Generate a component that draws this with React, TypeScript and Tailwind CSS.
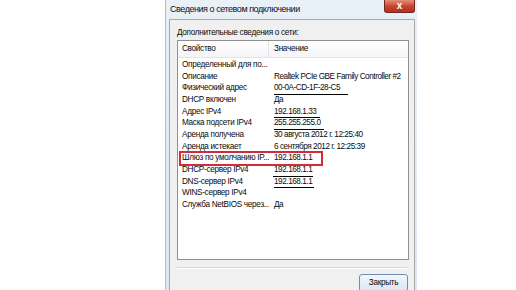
import React from "react";

type Row = { k: string; v: string; line?: number; lineLeft?: number; box?: boolean };

const rows: Row[] = [
  { k: "Определенный для по...", v: "" },
  { k: "Описание", v: "Realtek PCIe GBE Family Controller #2" },
  { k: "Физический адрес", v: "00-0A-CD-1F-28-C5", line: 74 },
  { k: "DHCP включен", v: "Да" },
  { k: "Адрес IPv4", v: "192.168.1.33", line: 46 },
  { k: "Маска подсети IPv4", v: "255.255.255.0", line: 50 },
  { k: "Аренда получена", v: "30 августа 2012 г. 12:25:40" },
  { k: "Аренда истекает", v: "6 сентября 2012 г. 12:25:39" },
  { k: "Шлюз по умолчанию IP...", v: "192.168.1.1", line: 39, lineLeft: 2, box: true },
  { k: "DHCP-сервер IPv4", v: "192.168.1.1", line: 40, lineLeft: -1 },
  { k: "DNS-сервер IPv4", v: "192.168.1.1", line: 40 },
  { k: "WINS-сервер IPv4", v: "" },
  { k: "Служба NetBIOS через...", v: "Да" },
];

export default function App() {
  return (
    <div
      className="w-[516px] h-[290px] bg-white overflow-hidden flex"
      style={{ fontFamily: '"Liberation Sans", Arial, sans-serif' }}
    >
      <div className="ml-[165px] w-[252px] h-full flex flex-col border-l border-[#aebfd2] bg-gradient-to-b from-[#e9f0f8] to-[#dbe6f2]">
        {/* title bar */}
        <div className="h-[19px] flex items-start shrink-0">
          <div className="pl-[4px] pt-[4px] text-[9px] leading-[11px] text-[#111] tracking-[-0.45px] whitespace-nowrap">
            Сведения о сетевом подключении
          </div>
          <div className="ml-auto mr-[2px] w-[31px] h-[13px] shrink-0 rounded-b-[3px] border border-t-0 border-[#6e2a20] bg-gradient-to-b from-[#e38f7c] via-[#c9452f] to-[#b3301c] flex items-center justify-center">
            <span className="text-white text-[10px] leading-none font-bold">x</span>
          </div>
        </div>
        {/* client area */}
        <div className="flex-1 ml-[3px] mr-[2px] border-t border-l border-r border-[#a5a9ae] bg-[#f0f0f0] flex flex-col pl-[7px] pr-[5px] text-[#0a0a0a]">
          <div className="pt-[7px] h-[20px] text-[8.2px] leading-[11px] tracking-[-0.3px] whitespace-nowrap">
            Дополнительные сведения о сети:
          </div>
          <div className="h-[220px] w-[232px] border border-[#8e8f8f] bg-white flex flex-col">
            <div className="h-[17px] flex bg-gradient-to-b from-white to-[#f4f5f7] border-b border-[#e3e4e6] text-[8.2px] tracking-[-0.3px] items-center">
              <div className="w-[91px] shrink-0 h-full pl-[4px] flex items-center border-r border-[#e3e4e6]">Свойство</div>
              <div className="pl-[5px]">Значение</div>
            </div>
            <div className="flex flex-col pt-[1px]">
              {rows.map((r, i) => (
                <div key={i} className="relative h-[11.67px] flex text-[8.2px] leading-[11.67px]">
                  <div className="w-[91px] shrink-0 pl-[4px] whitespace-nowrap overflow-hidden tracking-[-0.3px]">{r.k}</div>
                  <div className="relative pl-[5px] whitespace-nowrap tracking-[-0.45px]">
                    {r.v}
                    {r.line && (
                      <span
                        className="absolute bottom-[-1px] h-[1px] bg-black"
                        style={{ left: 5 + (r.lineLeft ?? 0), width: r.line }}
                      />
                    )}
                  </div>
                  {r.box && (
                    <span className="absolute left-[1px] top-[-1px] w-[144px] h-[15px] border-2 border-[#d42b36]" />
                  )}
                </div>
              ))}
            </div>
          </div>
          <div className="mt-[7px] h-[1px] w-[230px] bg-[#d5d5d5] border-b border-white box-content" />
          <div className="flex justify-end pr-[1px] mt-[5px]">
            <div className="w-[49px] h-[18px] rounded-[3px] border border-[#6f8db0] bg-gradient-to-b from-[#f2f7fc] to-[#d9e6f3] flex items-center justify-center text-[8.2px] tracking-[-0.3px]">
              Закрыть
            </div>
          </div>
        </div>
      </div>
    </div>
  );
}
